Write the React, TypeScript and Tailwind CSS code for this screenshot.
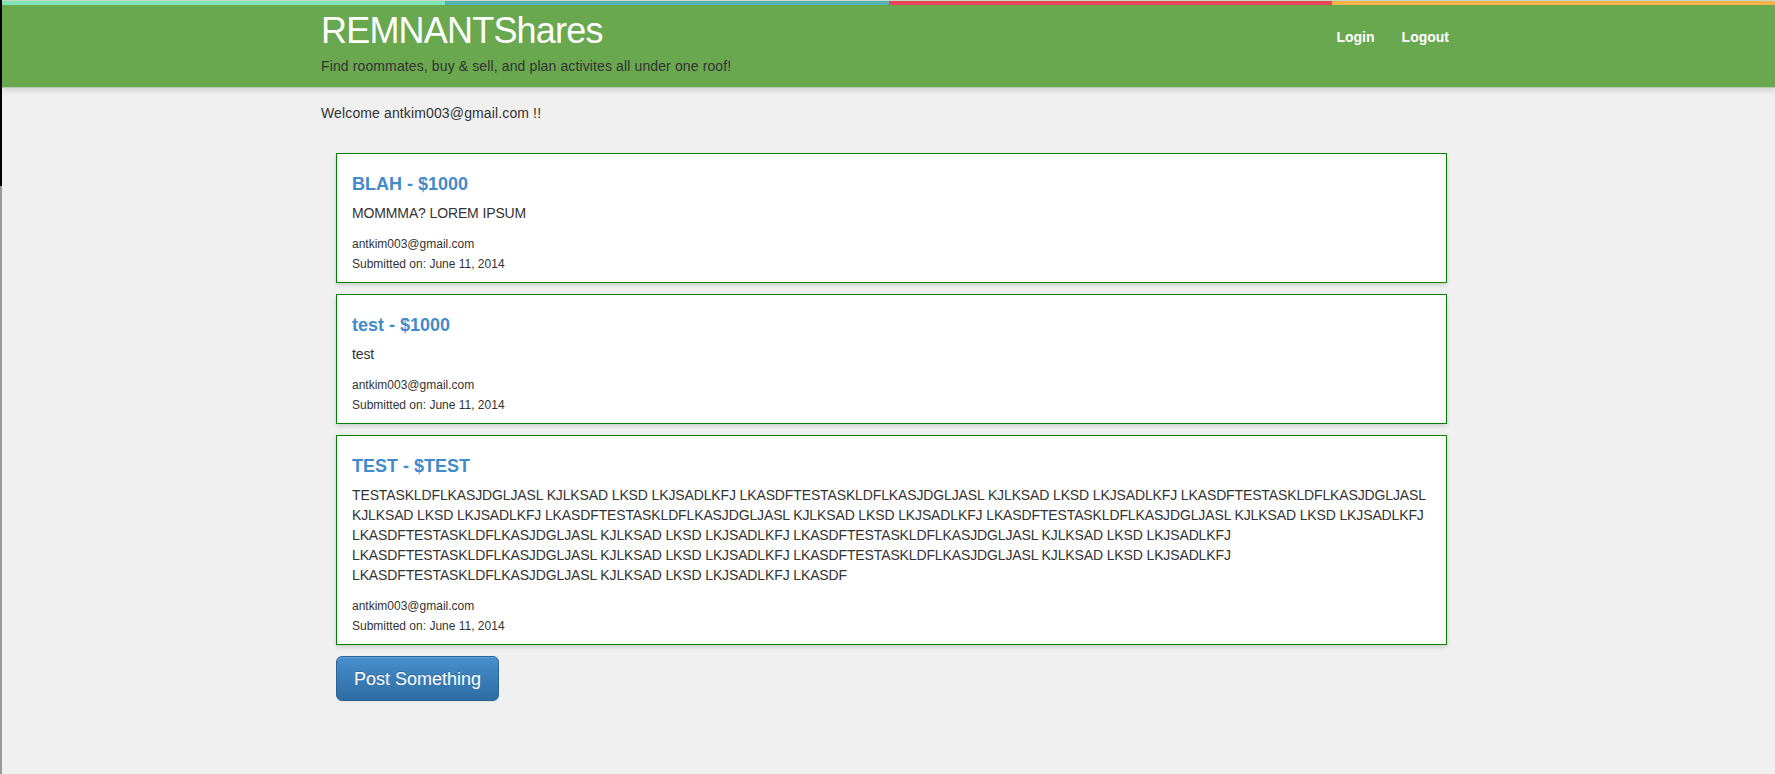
const w = "TESTASKLDFLKASJDGLJASL KJLKSAD LKSD LKJSADLKFJ";

// line breaks as they fall in the original browser
const longLines = [
  `${w} LKASDF${w} LKASDF${w.split(" ")[0]}`,
  `KJLKSAD LKSD LKJSADLKFJ LKASDF${w} LKASDF${w}`,
  `LKASDF${w} LKASDF${w}`,
  `LKASDF${w} LKASDF${w}`,
  `LKASDF${w} LKASDF`,
];

const posts = [
  { title: "BLAH - $1000", lines: ["MOMMMA? LOREM IPSUM"] },
  { title: "test - $1000", lines: ["test"] },
  { title: "TEST - $TEST", lines: longLines },
];

function PostCard({ title, lines }: { title: string; lines: string[] }) {
  return (
    <div className="w-[1111px] ml-[15px] border border-[#008000] bg-white pl-[15px] pr-[15px] pt-[20px] pb-[8px] shadow-[0_2px_4px_rgba(0,0,0,0.15)]">
      <h3 className="text-[18px] leading-[20px] font-bold text-[#428bca]">{title}</h3>
      <p className="mt-[9px] text-[14px] leading-[20px] tracking-[-0.13px] text-[#333]">
        {lines.map((l, i) => (
          <span key={i} className="block whitespace-nowrap">
            {l}
          </span>
        ))}
      </p>
      <div className="mt-[11px] text-[12px] leading-[20px] text-[#333]">
        <p>antkim003@gmail.com</p>
        <p>Submitted on: June 11, 2014</p>
      </div>
    </div>
  );
}

export default function App() {
  return (
    <div className="min-h-screen flex bg-[#f0f0f0] font-['Liberation_Sans',Arial,sans-serif] text-[#333]">
      <div className="w-[2px] flex flex-col">
        <div className="h-[186px] bg-black"></div>
        <div className="flex-1 bg-[#9a9a9a]"></div>
      </div>
      <div className="flex-1">
        <header className="bg-[#69a84f] h-[88px] border-b border-[#b9c7b2] shadow-[0_2px_6px_rgba(0,0,0,0.15)]">
          <div className="flex h-[5px] border-t border-[#c9d6c4]">
            <div className="flex-1 bg-[#80e3b5]"></div>
            <div className="flex-1 bg-[#52b3b5]"></div>
            <div className="flex-1 bg-[#e8465b]"></div>
            <div className="flex-1 bg-[#f8b24b]"></div>
          </div>
          <div className="mx-auto w-[1135px] flex justify-between items-start">
            <div>
              <h1 className="mt-[6px] text-[36px] leading-[40px] tracking-[-0.8px] text-white">REMNANTShares</h1>
              <p className="mt-[5px] text-[14px] leading-[20px] tracking-[0.12px] text-[#333]">
                Find roommates, buy &amp; sell, and plan activites all under one roof!
              </p>
            </div>
            <nav className="mt-[22px] pr-[7px] flex gap-[27px] text-[14px] leading-[20px] font-bold text-white">
              <a href="#">Login</a>
              <a href="#">Logout</a>
            </nav>
          </div>
        </header>
        <main className="mx-auto w-[1135px]">
          <p className="mt-[15px] text-[14px] leading-[20px] tracking-[0.13px]">Welcome antkim003@gmail.com !!</p>
          <div className="mt-[30px] flex flex-col gap-[11px]">
            {posts.map((p) => (
              <PostCard key={p.title} title={p.title} lines={p.lines} />
            ))}
          </div>
          <button className="mt-[11px] ml-[15px] h-[45px] px-[17px] rounded-[6px] border border-[#2b669a] bg-gradient-to-b from-[#4890cf] to-[#2d6ca2] text-[18px] leading-[24px] text-white [text-shadow:0_-1px_0_rgba(0,0,0,0.2)] shadow-[inset_0_1px_0_rgba(255,255,255,0.15),0_1px_1px_rgba(0,0,0,0.075)]">
            Post Something
          </button>
        </main>
      </div>
    </div>
  );
}
